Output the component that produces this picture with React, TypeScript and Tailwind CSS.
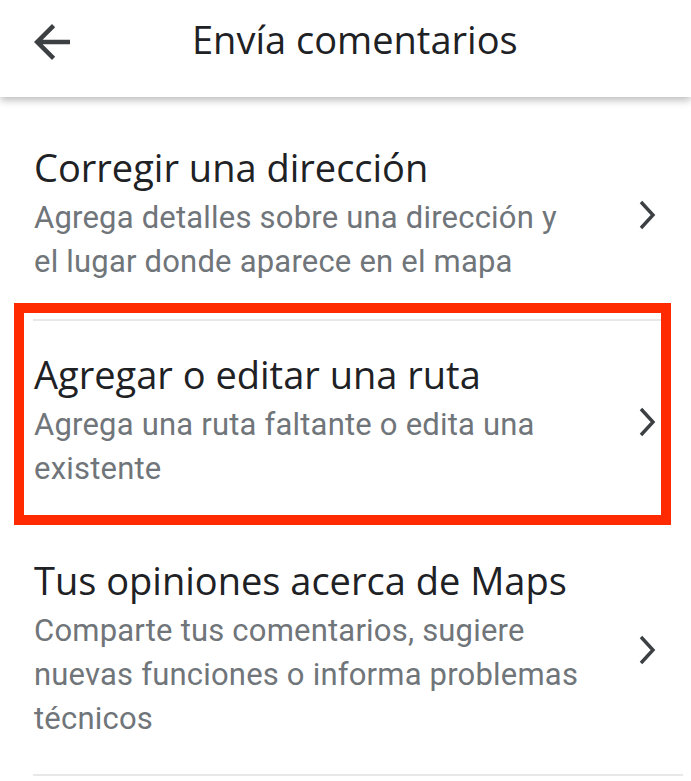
import React from "react";

type Item = {
  title: string;
  lines: string[];
};

const items: Item[] = [
  {
    title: "Corregir una dirección",
    lines: ["Agrega detalles sobre una dirección y", "el lugar donde aparece en el mapa"],
  },
  {
    title: "Agregar o editar una ruta",
    lines: ["Agrega una ruta faltante o edita una", "existente"],
  },
  {
    title: "Tus opiniones acerca de Maps",
    lines: ["Comparte tus comentarios, sugiere", "nuevas funciones o informa problemas", "técnicos"],
  },
];

function Chevron() {
  return (
    <svg viewBox="0 0 20 32" className="h-[32px] w-[20px] shrink-0" fill="none">
      <polyline points="4,3 16,16 4,29" stroke="#3c4043" strokeWidth="3.4" />
    </svg>
  );
}

function Row({ item }: { item: Item }) {
  return (
    <div className="flex items-center pl-[34px] pr-[34px]">
      <div className="flex-1">
        <h2 className="text-[38px] leading-[44px] text-[#202124] font-['Open_Sans',sans-serif]">
          {item.title}
        </h2>
        <p className="mt-[7px] text-[31px] leading-[44px] tracking-[0.2px] text-[#70757a]">
          {item.lines.map((l) => (
            <span key={l} className="block">
              {l}
            </span>
          ))}
        </p>
      </div>
      <Chevron />
    </div>
  );
}

export default function App() {
  return (
    <div className="relative h-[781px] w-[691px] overflow-hidden bg-white font-['Roboto',sans-serif]">
      <header className="relative z-10 flex h-[97px] items-start bg-white pt-[15px] shadow-[0_3px_8px_rgba(0,0,0,0.28)]">
        <svg viewBox="0 0 24 24" className="ml-[25px] h-[54px] w-[54px]" fill="#3c4043">
          <path d="M20 11H7.83l5.59-5.59L12 4l-8 8 8 8 1.41-1.41L7.83 13H20v-2z" />
        </svg>
        <h1 className="ml-[113px] mt-[2px] text-[38px] leading-[44px] text-[#202124] font-['Open_Sans',sans-serif]">
          Envía comentarios
        </h1>
      </header>

      <div className="pt-[48px]">
        <Row item={items[0]} />
        <div className="ml-[33px] mr-[22px] mt-[35px] h-[2px] bg-[#e8e8e8]" />

        <div className="relative pt-[31px]">
          <Row item={items[1]} />
          <div className="ml-[33px] mr-[22px] mt-[29px] h-[2px] bg-[#e8e8e8]" />
          <div className="absolute left-[14px] top-[-18px] h-[222px] w-[657px] border-[10px] border-[#ff2a00]" />
        </div>

        <div className="pt-[36px]">
          <Row item={items[2]} />
          <div className="ml-[33px] mr-[8px] mt-[33px] h-[2px] bg-[#e8e8e8]" />
        </div>
      </div>
    </div>
  );
}
